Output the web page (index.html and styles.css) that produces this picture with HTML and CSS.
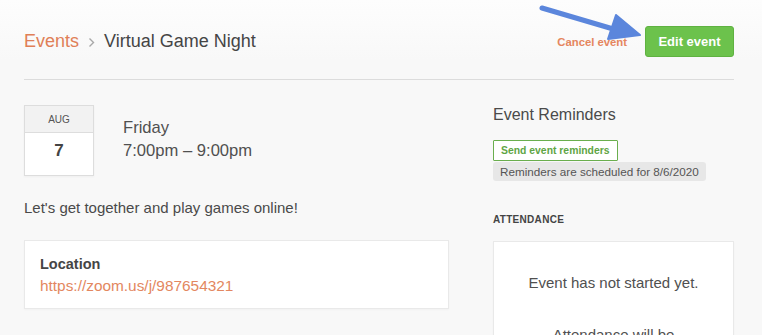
FILE: index.html
```html
<!DOCTYPE html>
<html lang="en">

<head>
    <meta charset="UTF-8">
    <meta name="viewport" content="width=device-width, initial-scale=1.0">
    <title>Virtual Game Night</title>
    <link rel="stylesheet" href="styles.css">
</head>

<body>
    <div class="page">
        <div class="header">
            <div class="breadcrumb">
                <a href="#" class="crumb-link">Events</a>
                <svg class="crumb-sep" width="7" height="11" viewBox="0 0 7 11">
                    <polyline points="1.5,1.5 5.5,5.5 1.5,9.5" fill="none" stroke="#a8a8a8" stroke-width="1.4" />
                </svg>
                <span class="crumb-current">Virtual Game Night</span>
            </div>
            <div class="header-actions">
                <a href="#" class="cancel-link">Cancel event</a>
                <button class="edit-button">Edit event</button>
            </div>
        </div>

        <div class="content">
            <div class="main-column">
                <div class="when">
                    <div class="date-box">
                        <div class="date-month">AUG</div>
                        <div class="date-day">7</div>
                    </div>
                    <div class="when-text">
                        <div>Friday</div>
                        <div>7:00pm – 9:00pm</div>
                    </div>
                </div>
                <p class="description">Let's get together and play games online!</p>
                <div class="card location-card">
                    <div class="card-title">Location</div>
                    <a href="#" class="location-link">https://zoom.us/j/987654321</a>
                </div>
            </div>

            <div class="side-column">
                <h2 class="side-heading">Event Reminders</h2>
                <button class="outline-button">Send event reminders</button>
                <div class="tag">Reminders are scheduled for 8/6/2020</div>

                <div class="section-label">ATTENDANCE</div>
                <div class="card attendance-card">
                    <p>Event has not started yet.</p>
                    <p>Attendance will be available once the event begins.</p>
                </div>
            </div>
        </div>
    </div>

    <!-- annotation arrow pointing at the edit button -->
    <svg class="annotation-arrow" width="110" height="50" viewBox="0 0 110 50">
        <line x1="4" y1="6" x2="82" y2="29" stroke="#5b86dc" stroke-width="5" stroke-linecap="round" />
        <polygon points="78,13 102,33 70,37" fill="#5b86dc" stroke="#5b86dc" stroke-width="2" stroke-linejoin="round" />
    </svg>
</body>

</html>
```

FILE: styles.css
```css
body {
    margin: 0;
    padding: 0;
    background: linear-gradient(#fdfdfd, #f8f8f8 60px);
    background-color: #f8f8f8;
    font-family: "Liberation Sans", Arial, sans-serif;
    color: #4a4a4a;
    position: relative;
    overflow: hidden;
    height: 335px;
}

.page {
    width: 710px;
    padding: 0 24px;
}

.header {
    display: flex;
    justify-content: space-between;
    align-items: center;
    padding-top: 26px;
    padding-bottom: 22px;
    border-bottom: 1px solid #dcdcdc;
}

.breadcrumb {
    display: flex;
    align-items: center;
    font-size: 18px;
}

.crumb-link {
    color: #e07f57;
    text-decoration: none;
}

.crumb-sep {
    margin: 2px 9px 0 9px;
}

.crumb-current {
    color: #454545;
}

.header-actions {
    display: flex;
    align-items: center;
}

.cancel-link {
    color: #e5865e;
    font-size: 11.3px;
    font-weight: bold;
    text-decoration: none;
    margin-right: 18px;
    margin-top: 1px;
}

.edit-button {
    height: 31px;
    width: 89px;
    border: 1px solid #5fb241;
    border-radius: 3px;
    background-color: #6cc24c;
    color: #ffffff;
    font-family: inherit;
    font-size: 13px;
    font-weight: bold;
    cursor: pointer;
}

.content {
    display: flex;
    justify-content: space-between;
    padding-top: 25px;
}

.main-column {
    width: 425px;
}

.when {
    display: flex;
    align-items: center;
}

.date-box {
    width: 68px;
    border: 1px solid #dddddd;
    background-color: #ffffff;
    box-shadow: 0 1px 2px rgba(0, 0, 0, 0.04);
}

.date-month {
    height: 26px;
    line-height: 27px;
    text-align: center;
    font-size: 10px;
    color: #555555;
    background-color: #f2f2f2;
    border-bottom: 1px solid #dddddd;
}

.date-day {
    height: 42px;
    line-height: 36px;
    text-align: center;
    font-size: 17px;
    font-weight: bold;
    color: #444444;
}

.when-text {
    margin-left: 29px;
    margin-top: -3px;
    font-size: 16.6px;
    line-height: 23px;
    color: #505050;
}

.description {
    margin: 22px 0 0 0;
    font-size: 15px;
    line-height: 20px;
    color: #4a4a4a;
}

.card {
    background-color: #ffffff;
    border: 1px solid #e9e9e9;
    box-shadow: 0 1px 2px rgba(0, 0, 0, 0.03);
}

.location-card {
    margin-top: 22px;
    padding: 13px 15px 12px 15px;
}

.card-title {
    font-size: 14.5px;
    line-height: 20px;
    font-weight: bold;
    color: #454545;
}

.location-link {
    display: block;
    margin-top: 2px;
    font-size: 15.4px;
    line-height: 20px;
    color: #e38760;
    text-decoration: none;
}

.side-column {
    width: 241px;
}

.side-heading {
    margin: 0;
    font-size: 16px;
    line-height: 20px;
    font-weight: normal;
    color: #4a4a4a;
}

.outline-button {
    display: block;
    margin-top: 15px;
    height: 21px;
    padding: 0 7px;
    border: 1px solid #6aae4e;
    border-radius: 1px;
    background-color: #ffffff;
    color: #5fa545;
    font-family: inherit;
    font-size: 10.4px;
    font-weight: bold;
    cursor: pointer;
}

.tag {
    display: inline-block;
    margin-top: 1px;
    padding: 0 7px;
    height: 19px;
    line-height: 19px;
    border-radius: 3px;
    background-color: #e7e7e7;
    color: #555555;
    font-size: 11.7px;
}

.section-label {
    margin-top: 33px;
    font-size: 10px;
    font-weight: bold;
    letter-spacing: 0.3px;
    color: #444444;
}

.attendance-card {
    margin-top: 16px;
    padding: 31px 30px;
    text-align: center;
    height: 200px;
}

.attendance-card p {
    margin: 0 0 32px 0;
    font-size: 15px;
    line-height: 20px;
    color: #505050;
}

.annotation-arrow {
    position: absolute;
    left: 538px;
    top: 2px;
}
```
